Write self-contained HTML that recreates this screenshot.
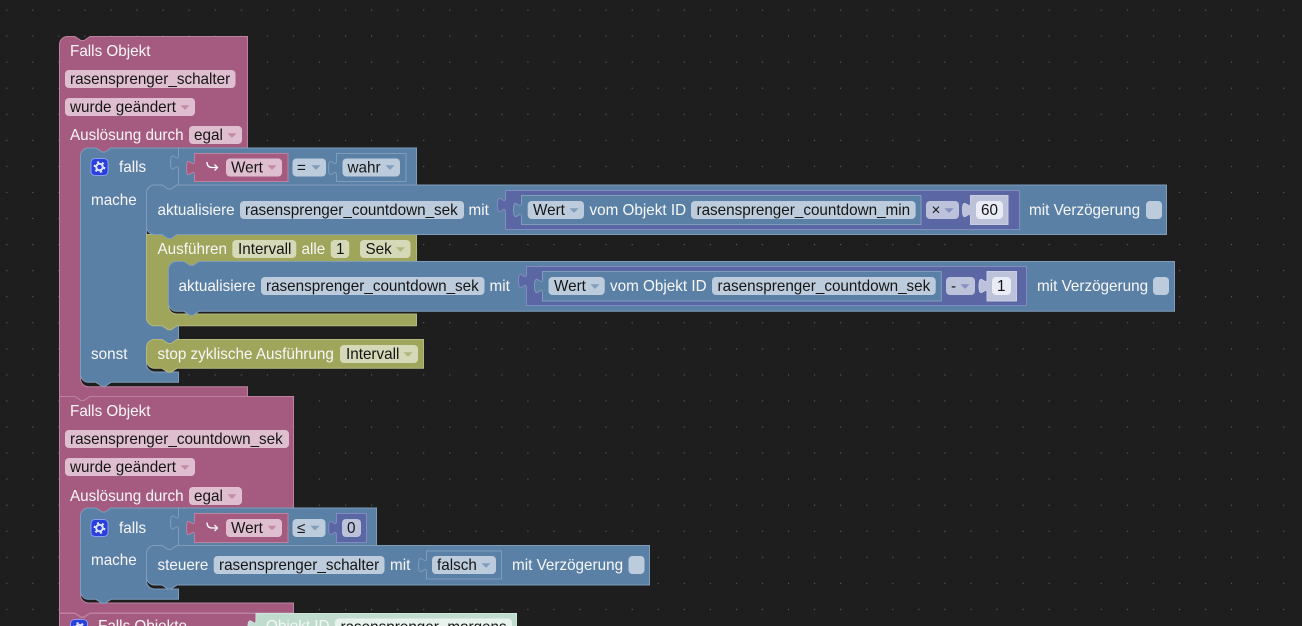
<!DOCTYPE html>
<html><head><meta charset="utf-8"><style>
html,body{margin:0;padding:0;background:#1e1e1e;width:1302px;height:626px;overflow:hidden}
svg{display:block;position:absolute;left:0;top:0}
text{font-family:"Liberation Sans",Arial,sans-serif;font-size:15.25px;fill:#f7f7f7;white-space:pre}
text.k{fill:#151515}
.P{fill:#a55b80;stroke:#bb83a0;stroke-width:1}
.B{fill:#5b80a5;stroke:#7f9cba;stroke-width:1}
.O{fill:#9fa55b;stroke:#b3b87f;stroke-width:1}
.U{fill:#5b67a5;stroke:#838cc0;stroke-width:1}
.S{fill:#bdc2db;stroke:#c9cde2;stroke-width:1}
.G{fill:#bfdccf;stroke:#cfe6db;stroke-width:1}
.pf{fill:#dfbfcf}.bf{fill:#bdccdd}.of{fill:#d5d9b7}.uf{fill:#bdc2db}.wf{fill:#e9ebf5}.gf{fill:#e9f3ee}
.pa{fill:#c48ba7}.ba{fill:#7f9dbc}.oa{fill:#b4b980}.ua{fill:#858fc3}
</style></head><body>
<svg width="1302" height="626" viewBox="0 0 1302 626" xmlns="http://www.w3.org/2000/svg">
<defs>
<pattern id="d" x="6.2" y="9.5" width="26.06" height="26.06" patternUnits="userSpaceOnUse"><rect width="1.1" height="1.1" fill="#626262"/></pattern>
<path id="a" d="M-4.6 -2.2H4.6L0 2.4Z"/>
<g id="gear"><rect x="0.5" y="0.5" width="17" height="17" rx="4" fill="#2b3fdc" stroke="#8b9df2"/><circle cx="9" cy="9" r="3.3" fill="none" stroke="#dfe6ff" stroke-width="2"/><circle cx="9" cy="9" r="5" fill="none" stroke="#dfe6ff" stroke-width="1.8" stroke-dasharray="2.2 3"/></g>
</defs>
<rect width="1302" height="626" fill="#1e1e1e"/>
<rect width="1302" height="626" fill="url(#d)"/>

<!-- BLOCK 1 -->
<path class="P" d="M59.5 44.5a8 8 0 0 1 8-8H75l6 4h3l6-4H247.5V148H111l-6 4h-3l-6-4H88.5a8 8 0 0 0-8 8V378.7a8 8 0 0 0 8 8H247.5V396.5H90l-6 4h-3l-6-4H59.5Z"/>
<text x="70" y="56">Falls Objekt</text>
<rect class="pf" x="65" y="70" width="170.5" height="18" rx="4"/><text class="k" x="70" y="84">rasensprenger_schalter</text>
<rect class="pf" x="65" y="98" width="130" height="18" rx="4"/><text class="k" x="70" y="112">wurde geändert</text><use href="#a" x="185" y="107.5" class="pa"/>
<text x="70" y="140">Auslösung durch</text>
<rect class="pf" x="189" y="126" width="53" height="18" rx="4"/><text class="k" x="194" y="140">egal</text><use href="#a" x="232" y="135.5" class="pa"/>

<path class="B" d="M80.5 156a8 8 0 0 1 8-8H96l6 4h3l6-4H416.5V185H177l-6 4h-3l-6-4H154.5a8 8 0 0 0-8 8V314a8 8 0 0 0 8 8H178.5V339.5H177l-6 4h-3l-6-4H154.5a8 8 0 0 0-8 8V364a8 8 0 0 0 8 8H178.5V382.3H111l-6 4h-3l-6-4H88.5a8 8 0 0 1-8-8Z"/>
<path d="M178.500 148V155c0 10-8-8-8 7.500s8-2.500 8 7.500V185" fill="none" stroke="#7f9cba"/>
<use href="#gear" x="90.500" y="158"/>
<text x="119" y="172">falls</text>
<text x="91" y="205">mache</text>
<text x="91" y="359">sonst</text>
<path class="P" d="M194.500 153.500H288V181.500H194.500V175.500c0-10-8 8-8-7.500s8 2.500 8-7.500Z"/>
<path d="M207 162c0 4 2 5.500 5 5.500h5.500M214.500 164.500l3 3-3 3" fill="none" stroke="#fff" stroke-width="1.300"/>
<rect class="pf" x="226" y="158.500" width="56" height="18" rx="4"/><text class="k" x="231" y="172.500">Wert</text><use href="#a" x="272" y="167.500" class="pa"/>
<rect class="bf" x="292.500" y="158.500" width="33.500" height="18" rx="4"/><text class="k" x="297" y="172.500">=</text><use href="#a" x="316" y="167.500" class="ba"/>
<path class="B" d="M336.500 153.500H406V181.500H336.500V175.500c0-10-8 8-8-7.500s8 2.500 8-7.500Z"/>
<rect class="bf" x="342.500" y="158.500" width="57.500" height="18" rx="4"/><text class="k" x="347.500" y="172.500">wahr</text><use href="#a" x="390" y="167.500" class="ba"/>

<!-- Ausführen -->
<path class="O" d="M146.500 234.500H162l6 4h3l6-4H416.500V261.500H199l-6 4h-3l-6-4H176.500a8 8 0 0 0-8 8V306a8 8 0 0 0 8 8H416.500V325.700H177l-6 4h-3l-6-4H154.500a8 8 0 0 1-8-8Z"/>
<text x="157.500" y="254">Ausführen</text>
<rect class="of" x="232.300" y="240" width="64" height="18" rx="4"/><text class="k" x="238" y="254">Intervall</text>
<text x="301.500" y="254">alle</text>
<rect class="of" x="330.700" y="240" width="18.500" height="18" rx="4"/><text class="k" x="336" y="254">1</text>
<rect class="of" x="360" y="240" width="50.500" height="18" rx="4"/><text class="k" x="365.500" y="254">Sek</text><use href="#a" x="400.500" y="249.500" class="oa"/>

<!-- aktualisiere 1 -->
<path class="B" d="M146.500 193a8 8 0 0 1 8-8H162l6 4h3l6-4H1166.500V234.500H177l-6 4h-3l-6-4H154.500a8 8 0 0 1-8-8Z"/>
<text x="157.500" y="215">aktualisiere</text>
<rect class="bf" x="240" y="201" width="224" height="18" rx="4"/><text class="k" x="245" y="215">rasensprenger_countdown_sek</text>
<text x="468.500" y="215">mit</text>
<path class="U" d="M505.500 190.500H1019.500V229.500H505.500V212.500c0-10-8 8-8-7.500s8 2.500 8-7.500Z"/>
<path class="B" d="M521.500 195.500H921V224.500H521.500V217.500c0-10-8 8-8-7.500s8 2.500 8-7.500Z"/>
<rect class="bf" x="527.700" y="201" width="56.300" height="18" rx="4"/><text class="k" x="533" y="215">Wert</text><use href="#a" x="574" y="210.500" class="ba"/>
<text x="589.500" y="215">vom Objekt ID</text>
<rect class="bf" x="691" y="201" width="224.600" height="18" rx="4"/><text class="k" x="696.500" y="215">rasensprenger_countdown_min</text>
<rect class="uf" x="926" y="201" width="33" height="18" rx="4"/><text class="k" x="931.500" y="215">×</text><use href="#a" x="949" y="210.500" class="ua"/>
<path class="S" d="M970.500 195.500H1008V224.500H970.500V217.500c0-10-8 8-8-7.500s8 2.500 8-7.500Z"/>
<rect class="wf" x="976" y="201" width="27" height="18" rx="4"/><text class="k" x="981" y="215">60</text>
<text x="1029" y="215">mit Verzögerung</text>
<rect class="bf" x="1146" y="201" width="16" height="18" rx="4"/>

<!-- aktualisiere 2 -->
<path class="B" d="M168.500 269.500a8 8 0 0 1 8-8H184l6 4h3l6-4H1174.500V311.300H199l-6 4h-3l-6-4H176.500a8 8 0 0 1-8-8Z"/>
<text x="178.500" y="291">aktualisiere</text>
<rect class="bf" x="261" y="277" width="223.500" height="18" rx="4"/><text class="k" x="266" y="291">rasensprenger_countdown_sek</text>
<text x="489.500" y="291">mit</text>
<path class="U" d="M526.500 266.500H1026.500V305.500H526.500V288.500c0-10-8 8-8-7.500s8 2.500 8-7.500Z"/>
<path class="B" d="M542.500 271.500H941.300V301H542.500V293.500c0-10-8 8-8-7.500s8 2.500 8-7.500Z"/>
<rect class="bf" x="548.500" y="277" width="56.200" height="18" rx="4"/><text class="k" x="554" y="291">Wert</text><use href="#a" x="595" y="286.500" class="ba"/>
<text x="610" y="291">vom Objekt ID</text>
<rect class="bf" x="712" y="277" width="223.700" height="18" rx="4"/><text class="k" x="717.500" y="291">rasensprenger_countdown_sek</text>
<rect class="uf" x="946" y="277" width="29" height="18" rx="4"/><text class="k" x="951" y="291">-</text><use href="#a" x="965" y="286.500" class="ua"/>
<path class="S" d="M987 271.500H1016.500V301H987V293.500c0-10-8 8-8-7.500s8 2.500 8-7.500Z"/>
<rect class="wf" x="992" y="277" width="19" height="18" rx="4"/><text class="k" x="997" y="291">1</text>
<text x="1037" y="291">mit Verzögerung</text>
<rect class="bf" x="1153" y="277" width="16" height="18" rx="4"/>

<!-- stop -->
<path class="O" d="M146.500 347.500a8 8 0 0 1 8-8H162l6 4h3l6-4H423.500V368.300H177l-6 4h-3l-6-4H154.500a8 8 0 0 1-8-8Z"/>
<text x="157.500" y="359">stop zyklische Ausführung</text>
<rect class="of" x="340" y="345" width="78" height="18" rx="4"/><text class="k" x="346" y="359">Intervall</text><use href="#a" x="408" y="354.500" class="oa"/>

<!-- BLOCK 2 -->
<path class="P" d="M59.500 396.500H75l6 4h3l6-4H293.500V508H111l-6 4h-3l-6-4H88.500a8 8 0 0 0-8 8V595a8 8 0 0 0 8 8H293.500V613H90l-6 4h-3l-6-4H59.500Z"/>
<text x="70" y="416">Falls Objekt</text>
<rect class="pf" x="65" y="430" width="224" height="18" rx="4"/><text class="k" x="70" y="444">rasensprenger_countdown_sek</text>
<rect class="pf" x="65" y="458" width="130" height="18" rx="4"/><text class="k" x="70" y="472">wurde geändert</text><use href="#a" x="185" y="467.500" class="pa"/>
<text x="70" y="501">Auslösung durch</text>
<rect class="pf" x="189" y="487" width="53" height="18" rx="4"/><text class="k" x="194" y="501">egal</text><use href="#a" x="232" y="496.500" class="pa"/>

<path class="B" d="M80.500 516a8 8 0 0 1 8-8H96l6 4h3l6-4H376.500V545.500H177l-6 4h-3l-6-4H154.500a8 8 0 0 0-8 8V581a8 8 0 0 0 8 8H178.500V599.300H111l-6 4h-3l-6-4H88.500a8 8 0 0 1-8-8Z"/>
<path d="M178.500 508V515c0 10-8-8-8 7.500s8-2.500 8 7.500V545.500" fill="none" stroke="#7f9cba"/>
<use href="#gear" x="90.500" y="519"/>
<text x="119" y="533">falls</text>
<text x="91" y="565">mache</text>
<path class="P" d="M194.500 513.500H288V542.500H194.500V535.500c0-10-8 8-8-7.500s8 2.500 8-7.500Z"/>
<path d="M207 522.500c0 4 2 5.500 5 5.500h5.500M214.500 525l3 3-3 3" fill="none" stroke="#fff" stroke-width="1.300"/>
<rect class="pf" x="226" y="519" width="56" height="18" rx="4"/><text class="k" x="231" y="533">Wert</text><use href="#a" x="272" y="528" class="pa"/>
<rect class="bf" x="292.500" y="519" width="33" height="18" rx="4"/><text class="k" x="297" y="533">≤</text><use href="#a" x="315" y="528" class="ba"/>
<path class="U" d="M336.500 513.500H366.500V542.500H336.500V535.500c0-10-8 8-8-7.500s8 2.500 8-7.500Z"/>
<rect class="uf" x="342" y="519" width="19" height="18" rx="4"/><text class="k" x="347" y="533">0</text>

<path class="B" d="M146.500 553.500a8 8 0 0 1 8-8H162l6 4h3l6-4H649.500V585H177l-6 4h-3l-6-4H154.500a8 8 0 0 1-8-8Z"/>
<text x="157.500" y="570">steuere</text>
<rect class="bf" x="213.700" y="556" width="170.800" height="18" rx="4"/><text class="k" x="219" y="570">rasensprenger_schalter</text>
<text x="390" y="570">mit</text>
<path class="B" d="M426.500 551H501.500V579H426.500V572.500c0-10-8 8-8-7.500s8 2.500 8-7.500Z"/>
<rect class="bf" x="432" y="556" width="64" height="18" rx="4"/><text class="k" x="437" y="570">falsch</text><use href="#a" x="486" y="565.500" class="ba"/>
<text x="512" y="570">mit Verzögerung</text>
<rect class="bf" x="628.500" y="556" width="16" height="18" rx="4"/>

<!-- BLOCK 3 -->
<path class="P" d="M59.500 613.500H75l6 4h3l6-4H256V640H59.500Z"/>
<use href="#gear" x="70" y="619"/>
<text x="98" y="631">Falls Objekte</text>
<path class="G" d="M256 613.500H516.500V640H256V635c0-10-8 8-8-7.500s8 2.500 8-7.500Z"/>
<text x="266" y="631">Objekt ID</text>
<rect class="gf" x="335" y="618.500" width="177" height="18" rx="4"/><text class="k" x="340.500" y="632">rasensprenger_morgens</text>
</svg>
</body></html>
